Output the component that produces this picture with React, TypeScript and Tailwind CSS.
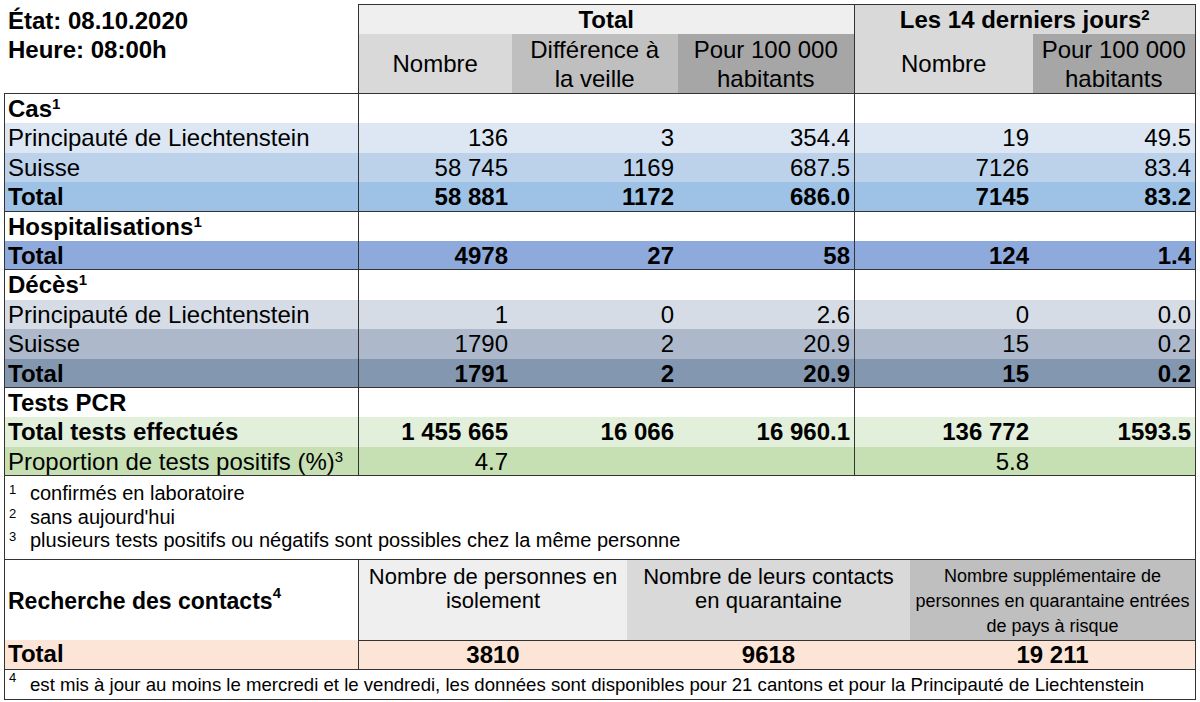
import React from "react";

const COLS = "grid grid-cols-[353px_154px_166px_176px_179px_162px]";
const HEAD_COLS = "grid grid-cols-[153px_166px_176px_179px_162px]";
const CONTACT_COLS = "grid grid-cols-[353px_269px_283px_285px]";

type Row = {
  label: React.ReactNode;
  vals?: string[];
  bg: string;
  bold?: boolean;
  line?: boolean;
};

const Sup = ({ n }: { n: string }) => (
  <sup className="text-[15px] -top-[8px]">{n}</sup>
);

const rows: Row[] = [
  { label: <>Cas<Sup n="1" /></>, bg: "bg-white", bold: true },
  { label: "Principauté de Liechtenstein", vals: ["136", "3", "354.4", "19", "49.5"], bg: "bg-[#dde7f3]" },
  { label: "Suisse", vals: ["58 745", "1169", "687.5", "7126", "83.4"], bg: "bg-[#bcd2ea]" },
  { label: "Total", vals: ["58 881", "1172", "686.0", "7145", "83.2"], bg: "bg-[#9dc2e6]", bold: true, line: true },
  { label: <>Hospitalisations<Sup n="1" /></>, bg: "bg-white", bold: true },
  { label: "Total", vals: ["4978", "27", "58", "124", "1.4"], bg: "bg-[#8eaadc]", bold: true, line: true },
  { label: <>Décès<Sup n="1" /></>, bg: "bg-white", bold: true },
  { label: "Principauté de Liechtenstein", vals: ["1", "0", "2.6", "0", "0.0"], bg: "bg-[#d6dce5]" },
  { label: "Suisse", vals: ["1790", "2", "20.9", "15", "0.2"], bg: "bg-[#adb9ca]" },
  { label: "Total", vals: ["1791", "2", "20.9", "15", "0.2"], bg: "bg-[#8497b0]", bold: true, line: true },
  { label: "Tests PCR", bg: "bg-white", bold: true },
  { label: "Total tests effectués", vals: ["1 455 665", "16 066", "16 960.1", "136 772", "1593.5"], bg: "bg-[#e2efda]", bold: true },
  { label: <>Proportion de tests positifs (%)<Sup n="3" /></>, vals: ["4.7", "", "", "5.8", ""], bg: "bg-[#c6e0b4]", line: true },
];

function BodyRow({ r }: { r: Row }) {
  const vals = r.vals ?? ["", "", "", "", ""];
  return (
    <div
      className={`${COLS} h-[29.4px] leading-[29px] ${r.bg} ${r.bold ? "font-bold" : ""} ${r.line ? "border-b border-[#333]" : ""}`}
    >
      <div className="pl-[3px] whitespace-nowrap">{r.label}</div>
      {vals.map((v, i) => (
        <div
          key={i}
          className={`text-right pr-[4px] whitespace-nowrap ${i === 0 || i === 3 ? "border-l border-[#333]" : ""}`}
        >
          {v}
        </div>
      ))}
    </div>
  );
}

const notes = [
  { n: "1", t: "confirmés en laboratoire" },
  { n: "2", t: "sans aujourd'hui" },
  { n: "3", t: "plusieurs tests positifs ou négatifs sont possibles chez la même personne" },
];

export default function App() {
  return (
    <div className="w-[1200px] h-[702px] bg-white text-black font-['Liberation_Sans',Arial,sans-serif] text-[24px] pt-[4px] px-[4px] overflow-hidden">
      {/* header */}
      <div className="flex">
        <div className="w-[354px] pl-[4px] pt-[2px] font-bold leading-[29px]">
          <div>État: 08.10.2020</div>
          <div>Heure: 08:00h</div>
        </div>
        <div className="w-[839px] border border-b-0 border-[#333]">
          <div className={`${HEAD_COLS} h-[29px] leading-[29px] font-bold text-center`}>
            <div className="col-span-3 bg-[#efefef]">Total</div>
            <div className="col-span-2 border-l border-[#333] bg-[#d9d9d9]">
              Les 14 derniers jours<Sup n="2" />
            </div>
          </div>
          <div className={`${HEAD_COLS} h-[59px] leading-[29px] text-center`}>
            <div className="bg-[#d9d9d9] flex items-center justify-center">Nombre</div>
            <div className="bg-[#bfbfbf] flex items-center justify-center">
              Différence à<br />la veille
            </div>
            <div className="bg-[#a6a6a6] flex items-center justify-center">
              Pour 100 000<br />habitants
            </div>
            <div className="bg-[#d9d9d9] border-l border-[#333] flex items-center justify-center">Nombre</div>
            <div className="bg-[#a6a6a6] flex items-center justify-center">
              Pour 100 000<br />habitants
            </div>
          </div>
        </div>
      </div>

      {/* main body */}
      <div className="w-[1192px] border-x border-t border-[#333]">
        {rows.map((r, i) => (
          <BodyRow key={i} r={r} />
        ))}
      </div>

      {/* footnotes */}
      <div className="w-[1192px] h-[84px] border-x border-b border-[#333] pt-[6px] text-[20px] leading-[23.5px]">
        {notes.map((n) => (
          <div key={n.n} className="flex">
            <span className="w-[25px] pl-[4px] text-[13px] leading-[16px]">{n.n}</span>
            <span>{n.t}</span>
          </div>
        ))}
      </div>

      {/* contact tracing */}
      <div className="w-[1192px] border-x border-[#333]">
        <div className={`${CONTACT_COLS} h-[80px]`}>
          <div className="pl-[3px] flex items-center font-bold text-[23px] pt-[2px]">
            Recherche des contacts<Sup n="4" />
          </div>
          <div className="border-l border-[#333] bg-[#efefef] text-center text-[22px] leading-[24px] pt-[5px]">
            Nombre de personnes en<br />isolement
          </div>
          <div className="bg-[#d9d9d9] text-center text-[22px] leading-[24px] pt-[5px]">
            Nombre de leurs contacts<br />en quarantaine
          </div>
          <div className="bg-[#bfbfbf] text-center text-[18px] leading-[25px] pt-[4px]">
            Nombre supplémentaire de<br />personnes en quarantaine entrées<br />de pays à risque
          </div>
        </div>
        <div className={`${CONTACT_COLS} h-[29px] leading-[28px] bg-[#fce4d6] font-bold`}>
          <div className="pl-[3px]">Total</div>
          <div className="border-l border-t border-[#333] text-center">3810</div>
          <div className="border-t border-[#333] text-center">9618</div>
          <div className="border-t border-[#333] text-center">19 211</div>
        </div>
      </div>
      <div className="w-[1192px] h-[31px] border border-[#333] flex text-[18.6px] leading-[30px] whitespace-nowrap">
        <span className="w-[25px] pl-[4px] text-[13px] leading-[16px]">4</span>
        <span>
          est mis à jour au moins le mercredi et le vendredi, les données sont disponibles pour 21 cantons et pour la Principauté de Liechtenstein
        </span>
      </div>
    </div>
  );
}
